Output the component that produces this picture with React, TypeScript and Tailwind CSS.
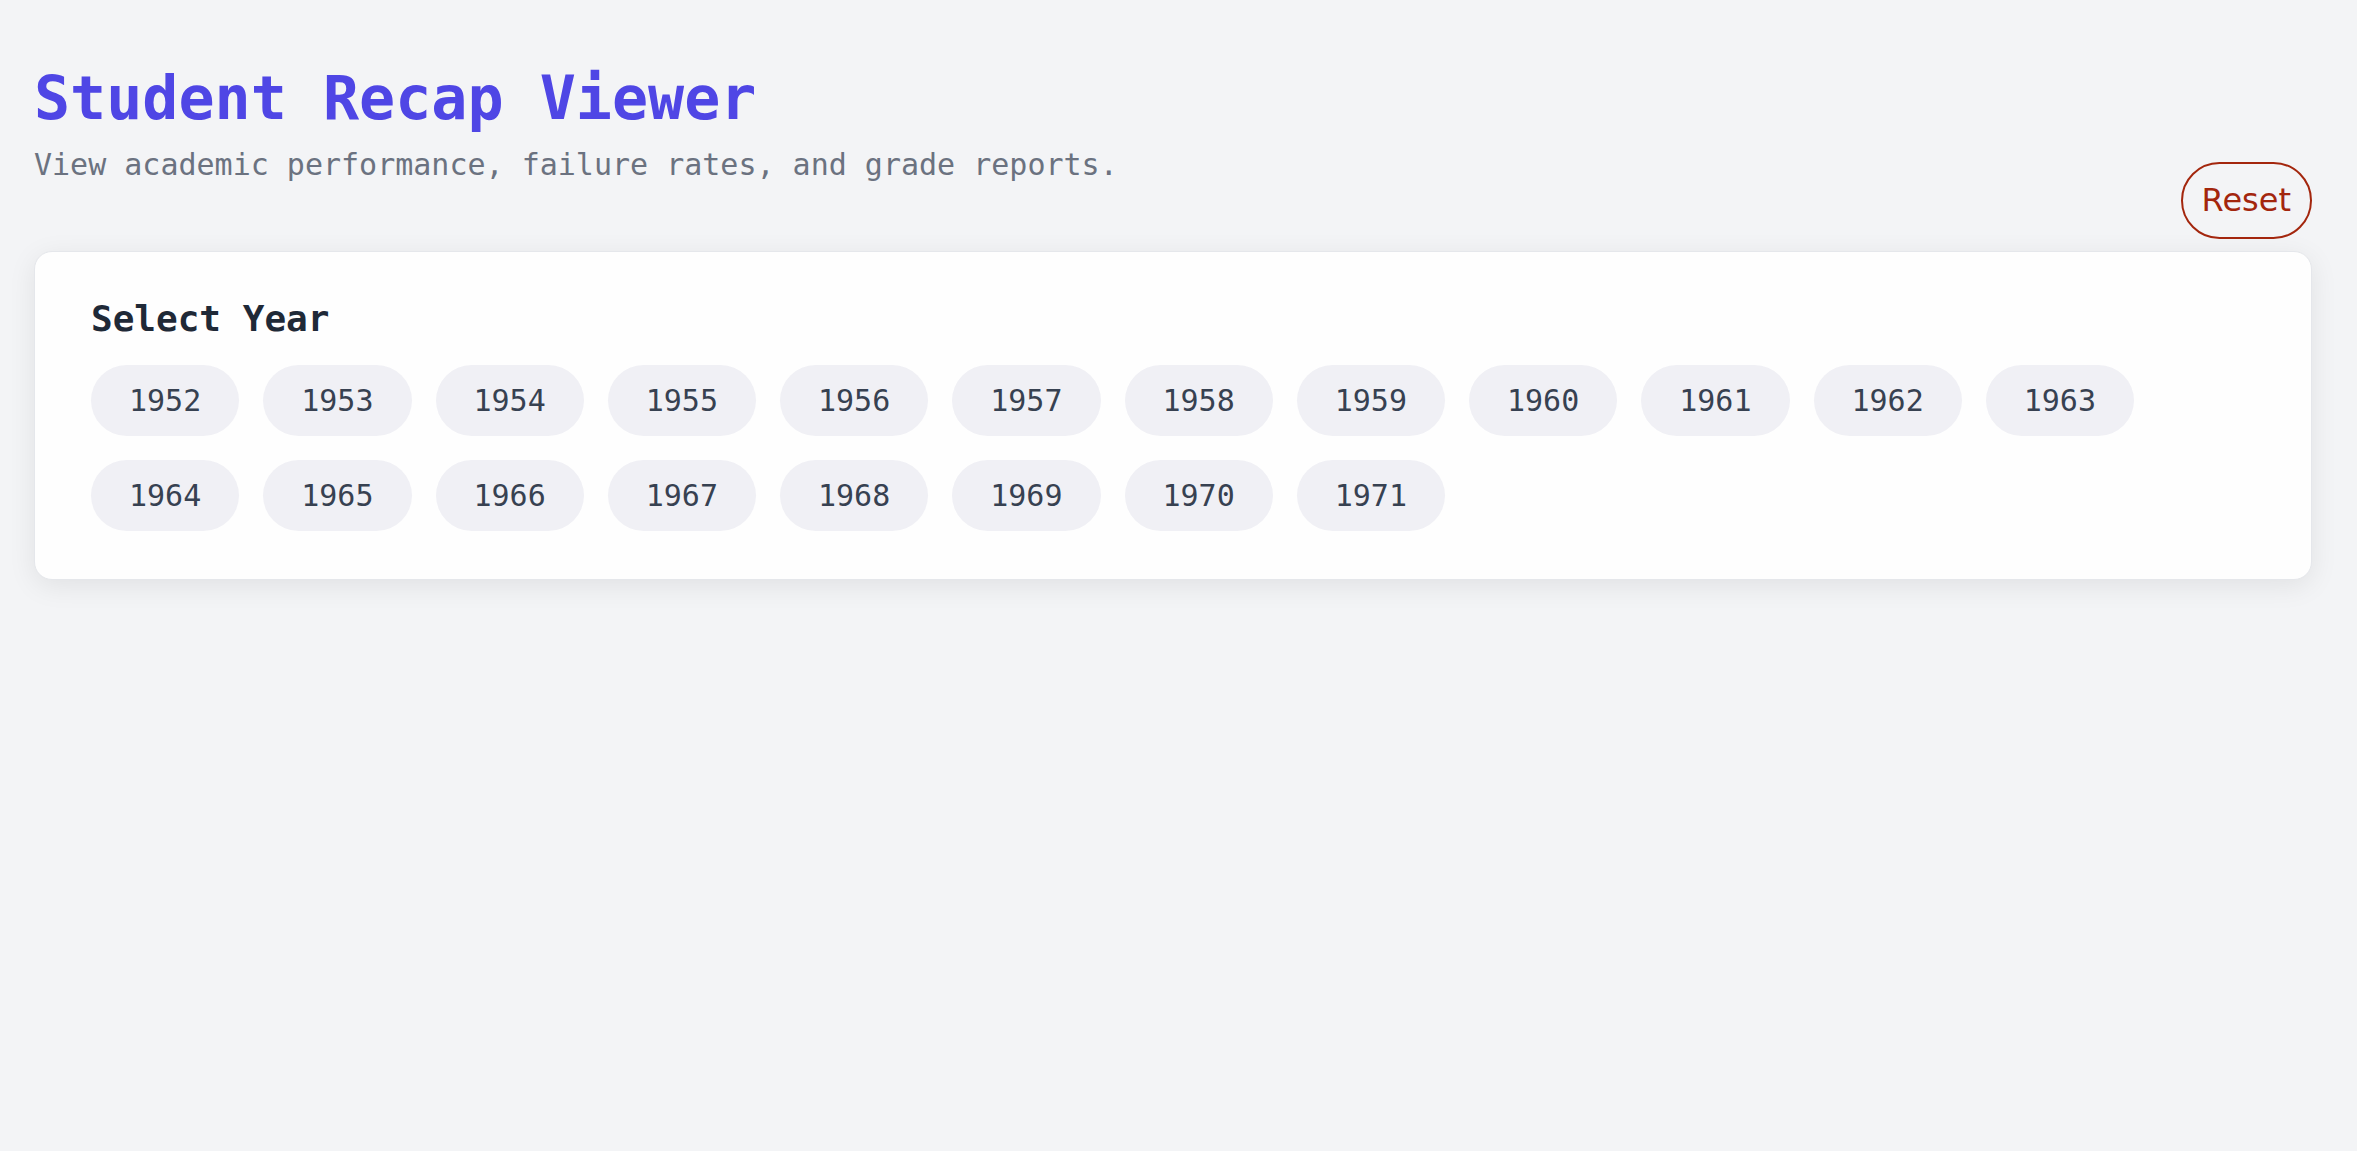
import React from "react";

const years = Array.from({ length: 20 }, (_, i) => 1952 + i);

export default function App() {
  return (
    <div className="min-h-screen bg-[#f3f4f6] pl-[34px] pr-[45px] pt-[68px] font-['DejaVu_Sans_Mono',monospace]">
      <div className="flex items-start justify-between">
        <div>
          <h1 className="text-[60px] leading-[60px] font-bold text-[#4f46e5]">
            Student Recap Viewer
          </h1>
          <p className="mt-[14px] text-[30px] leading-[45px] text-[#6b7280]">
            View academic performance, failure rates, and grade reports.
          </p>
        </div>
        <button className="mt-[94px] rounded-full border-2 border-[#a3260d] px-[19px] py-[12px] text-[32px] leading-[49px] text-[#a3260d] font-['DejaVu_Sans',sans-serif]">
          Reset
        </button>
      </div>
      <div className="mt-[12px] rounded-[18px] border border-[#e5e7eb] bg-[#fefefe] pl-[56px] pr-[55px] pt-[47px] pb-[48px] shadow-[0_6px_28px_rgba(0,0,0,0.08)]">
        <h2 className="text-[36px] leading-[40px] font-bold text-[#1f2937]">
          Select Year
        </h2>
        <div className="mt-[26px] flex flex-wrap gap-[24px]">
          {years.map((y) => (
            <button
              key={y}
              className="rounded-full bg-[#f0f0f5] px-[38px] py-[13px] text-[30px] leading-[45px] text-[#374151]"
            >
              {y}
            </button>
          ))}
        </div>
      </div>
    </div>
  );
}
